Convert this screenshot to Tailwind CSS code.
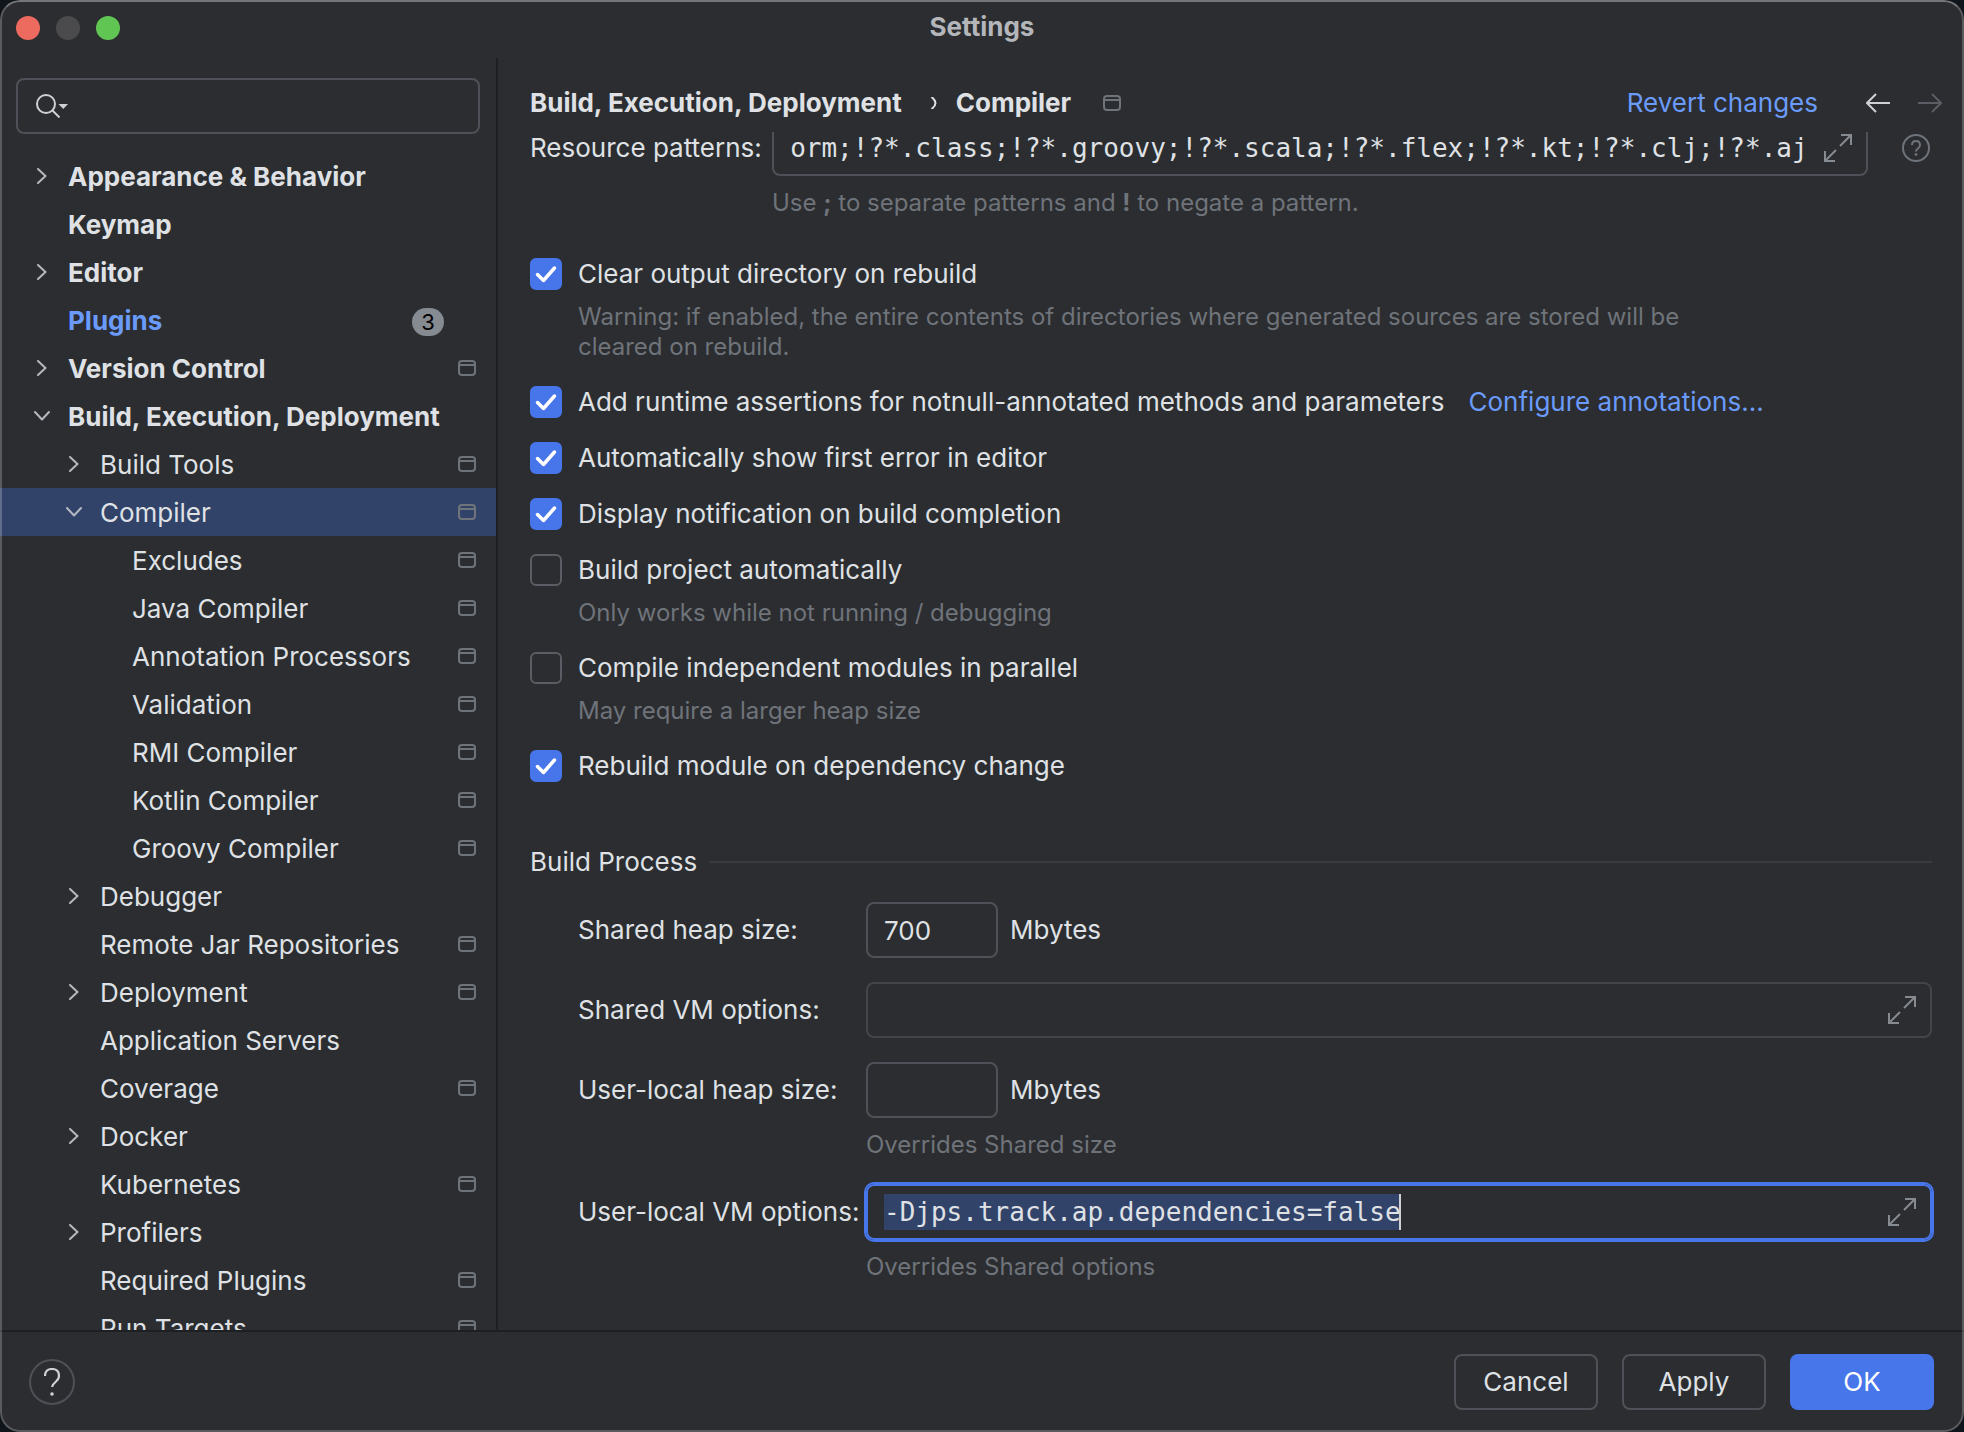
<!DOCTYPE html>
<html lang="en">
<head>
<meta charset="utf-8">
<title>Settings</title>
<meta name="viewport" content="width=device-width, initial-scale=1">
<script src="https://cdn.jsdelivr.net/npm/@tailwindcss/browser@4"></script>
</head>
<body class="bg-[#10151c] font-['Inter',sans-serif] text-[26px] leading-8 text-[#dfe1e5]">

<svg class="hidden" aria-hidden="true">
  <symbol id="right" viewBox="0 0 16 16"><path d="M4 1l7.500 7L4 15" fill="none" stroke="#b4b8bf" stroke-width="2" stroke-linecap="round" stroke-linejoin="round"/></symbol>
  <symbol id="down" viewBox="0 0 16 16"><path d="M1 4l7 7.500L15 4" fill="none" stroke="#b4b8bf" stroke-width="2" stroke-linecap="round" stroke-linejoin="round"/></symbol>
  <symbol id="project" viewBox="0 0 18 16"><rect x="1" y="1" width="16" height="14" rx="3" fill="none" stroke="#6f737a" stroke-width="2"/><path d="M1 5h16" stroke="#6f737a" stroke-width="2"/></symbol>
  <symbol id="expand" viewBox="0 0 28 28"><path d="M17 1h10v10M27 1L16 12M11 27H1V17M1 27l11-11" fill="none" stroke="#868a91" stroke-width="2"/></symbol>
  <symbol id="tick" viewBox="0 0 32 32"><path d="M7.500 16.500l6 6L24.500 10" fill="none" stroke="#fff" stroke-width="3.500" stroke-linecap="round" stroke-linejoin="round"/></symbol>
</svg>

<div class="relative flex h-screen flex-col overflow-hidden rounded-[20px] bg-[#2b2d30]">
  <header class="relative flex h-[58px] shrink-0 items-center justify-center pb-1">
    <div class="absolute top-4 left-4 flex gap-4">
      <button aria-label="Close" class="size-6 rounded-full bg-[#ed6a5e]"></button>
      <button aria-label="Minimize" class="size-6 rounded-full bg-[#4b4b4d]"></button>
      <button aria-label="Zoom" class="size-6 rounded-full bg-[#61c554]"></button>
    </div>
    <h1 class="font-bold text-[#b4b6ba]">Settings</h1>
  </header>

  <div class="flex min-h-0 flex-1">
    <nav aria-label="Settings categories" class="flex w-[498px] shrink-0 flex-col overflow-hidden border-r-2 border-[#1e1f22] pt-5">
      <div class="relative mx-4 mb-[18px] h-14 shrink-0">
        <input type="search" aria-label="Search settings" class="h-full w-full rounded-lg border-2 border-[#4e5157] bg-transparent pr-4 pl-14 outline-none">
        <svg class="pointer-events-none absolute top-4 left-5 h-6 w-8" viewBox="0 0 32 24" fill="none"><circle cx="10" cy="10" r="9" stroke="#ced0d6" stroke-width="2"/><path d="M16.500 16.500l7 7" stroke="#ced0d6" stroke-width="2"/><path d="M22.500 10h9.500l-4.750 5z" fill="#ced0d6"/></svg>
      </div>
      <ul class="whitespace-nowrap [&_a]:flex [&_a]:h-12 [&_a]:items-center [&_a]:pr-5 [&_a>span:first-of-type]:flex-1 [&_a>span:first-of-type]:pt-0.5 [&_svg]:h-4 [&_svg]:shrink-0">
        <li><a href="#" class="gap-[18px] pl-[34px] font-bold"><svg class="w-4"><use href="#right"/></svg><span>Appearance &amp; Behavior</span></a></li>
        <li><a href="#" class="pl-[68px] font-bold"><span>Keymap</span></a></li>
        <li><a href="#" class="gap-[18px] pl-[34px] font-bold"><svg class="w-4"><use href="#right"/></svg><span>Editor</span></a></li>
        <li><a href="#" class="pl-[68px] font-bold text-[#6b9bfa]"><span>Plugins</span><span class="mt-1 mr-8 h-7 w-8 rounded-full bg-[#868a91] text-center text-[22px] leading-7 font-normal text-black">3</span></a></li>
        <li><a href="#" class="gap-[18px] pl-[34px] font-bold"><svg class="w-4"><use href="#right"/></svg><span>Version Control</span><svg class="w-[18px]"><use href="#project"/></svg></a></li>
        <li><a href="#" class="gap-[18px] pl-[34px] font-bold"><svg class="w-4"><use href="#down"/></svg><span>Build, Execution, Deployment</span></a></li>
        <li><a href="#" class="gap-[18px] pl-[66px]"><svg class="w-4"><use href="#right"/></svg><span>Build Tools</span><svg class="w-[18px]"><use href="#project"/></svg></a></li>
        <li><a href="#" aria-current="page" class="gap-[18px] bg-[#32436a] pl-[66px]"><svg class="w-4"><use href="#down"/></svg><span>Compiler</span><svg class="w-[18px]"><use href="#project"/></svg></a></li>
        <li><a href="#" class="pl-[132px]"><span>Excludes</span><svg class="w-[18px]"><use href="#project"/></svg></a></li>
        <li><a href="#" class="pl-[132px]"><span>Java Compiler</span><svg class="w-[18px]"><use href="#project"/></svg></a></li>
        <li><a href="#" class="pl-[132px]"><span>Annotation Processors</span><svg class="w-[18px]"><use href="#project"/></svg></a></li>
        <li><a href="#" class="pl-[132px]"><span>Validation</span><svg class="w-[18px]"><use href="#project"/></svg></a></li>
        <li><a href="#" class="pl-[132px]"><span>RMI Compiler</span><svg class="w-[18px]"><use href="#project"/></svg></a></li>
        <li><a href="#" class="pl-[132px]"><span>Kotlin Compiler</span><svg class="w-[18px]"><use href="#project"/></svg></a></li>
        <li><a href="#" class="pl-[132px]"><span>Groovy Compiler</span><svg class="w-[18px]"><use href="#project"/></svg></a></li>
        <li><a href="#" class="gap-[18px] pl-[66px]"><svg class="w-4"><use href="#right"/></svg><span>Debugger</span></a></li>
        <li><a href="#" class="pl-[100px]"><span>Remote Jar Repositories</span><svg class="w-[18px]"><use href="#project"/></svg></a></li>
        <li><a href="#" class="gap-[18px] pl-[66px]"><svg class="w-4"><use href="#right"/></svg><span>Deployment</span><svg class="w-[18px]"><use href="#project"/></svg></a></li>
        <li><a href="#" class="pl-[100px]"><span>Application Servers</span></a></li>
        <li><a href="#" class="pl-[100px]"><span>Coverage</span><svg class="w-[18px]"><use href="#project"/></svg></a></li>
        <li><a href="#" class="gap-[18px] pl-[66px]"><svg class="w-4"><use href="#right"/></svg><span>Docker</span></a></li>
        <li><a href="#" class="pl-[100px]"><span>Kubernetes</span><svg class="w-[18px]"><use href="#project"/></svg></a></li>
        <li><a href="#" class="gap-[18px] pl-[66px]"><svg class="w-4"><use href="#right"/></svg><span>Profilers</span></a></li>
        <li><a href="#" class="pl-[100px]"><span>Required Plugins</span><svg class="w-[18px]"><use href="#project"/></svg></a></li>
        <li><a href="#" class="pl-[100px]"><span>Run Targets</span><svg class="w-[18px]"><use href="#project"/></svg></a></li>
      </ul>
    </nav>

    <main class="flex min-w-0 flex-1 flex-col">
      <div class="flex h-[74px] shrink-0 items-center pt-4 pr-[22px] pl-8">
        <h2 class="flex items-center font-bold whitespace-nowrap">
          <span>Build, Execution, Deployment</span>
          <svg class="mr-[18px] ml-7 h-3 w-2" viewBox="0 0 8 12" fill="none"><path d="M1.500 0q4 3 4 6t-4 6" stroke="#dfe1e5" stroke-width="2"/></svg>
          <span>Compiler</span>
          <svg class="ml-8 h-4 w-[18px]"><use href="#project"/></svg>
        </h2>
        <a href="#" class="ml-auto whitespace-nowrap text-[#6b9bfa]">Revert changes</a>
        <button aria-label="Back" class="ml-12"><svg class="h-5 w-6" viewBox="0 0 24 20" fill="none" stroke="#ced0d6" stroke-width="2"><path d="M24 10H1M10 1l-9 9 9 9"/></svg></button>
        <button aria-label="Forward" disabled class="ml-7"><svg class="h-5 w-6" viewBox="0 0 24 20" fill="none" stroke="#5a5d63" stroke-width="2"><path d="M0 10h23M14 1l9 9-9 9"/></svg></button>
      </div>

      <form class="min-h-0 flex-1 overflow-hidden px-8">
        <div class="-mt-3 flex items-center">
          <label for="patterns" class="w-[242px] shrink-0">Resource patterns:</label>
          <div class="flex h-14 min-w-0 flex-1 items-center rounded-lg border-2 border-[#4e5157] pr-3.5 pl-[15px]">
            <input id="patterns" type="text" value="!?*.java;!?*.form;!?*.class;!?*.groovy;!?*.scala;!?*.flex;!?*.kt;!?*.clj;!?*.aj" class="h-9 min-w-0 flex-1 bg-transparent font-['DejaVu_Sans_Mono',monospace] outline-none">
            <button type="button" aria-label="Expand" class="ml-4"><svg class="size-7"><use href="#expand"/></svg></button>
          </div>
          <svg class="mr-0.5 ml-[34px] size-7 shrink-0" viewBox="0 0 28 28" fill="none" stroke="#6f737a" stroke-width="2"><circle cx="14" cy="14" r="13"/><path d="M10 11q0-4 4-4t4 4q0 2-2 3.500T14 17.500"/><circle cx="14" cy="20.500" r="1" fill="#6f737a" stroke-width="1"/></svg>
        </div>
        <p class="mt-3 ml-[242px] text-2xl leading-[30px] text-[#6f737a]">Use <b>;</b> to separate patterns and <b>!</b> to negate a pattern.</p>

        <div class="mt-10 [&_input]:col-start-1 [&_input]:row-start-1 [&_input]:size-8 [&_input]:appearance-none [&_input]:rounded-md [&_input]:border-2 [&_input]:border-[#5a5d63] [&_input:checked]:bg-[#4775ea] [&_input:checked]:border-[#4775ea] [&_label]:flex [&_label]:w-fit [&_label]:items-center [&_label]:gap-4 [&_p]:mt-3 [&_p]:ml-12 [&_p]:text-2xl [&_p]:leading-[30px] [&_p]:text-[#6f737a]">
          <label><span class="grid"><input type="checkbox" checked class="peer"><svg class="pointer-events-none col-start-1 row-start-1 hidden size-8 peer-checked:block"><use href="#tick"/></svg></span>Clear output directory on rebuild</label>
          <p class="max-w-[1120px]">Warning: if enabled, the entire contents of directories where generated sources are stored will be cleared on rebuild.</p>
          <div class="mt-6 flex items-center gap-6">
            <label><span class="grid"><input type="checkbox" checked class="peer"><svg class="pointer-events-none col-start-1 row-start-1 hidden size-8 peer-checked:block"><use href="#tick"/></svg></span>Add runtime assertions for notnull-annotated methods and parameters</label>
            <a href="#" class="text-[#6b9bfa]">Configure annotations...</a>
          </div>
          <label class="mt-6"><span class="grid"><input type="checkbox" checked class="peer"><svg class="pointer-events-none col-start-1 row-start-1 hidden size-8 peer-checked:block"><use href="#tick"/></svg></span>Automatically show first error in editor</label>
          <label class="mt-6"><span class="grid"><input type="checkbox" checked class="peer"><svg class="pointer-events-none col-start-1 row-start-1 hidden size-8 peer-checked:block"><use href="#tick"/></svg></span>Display notification on build completion</label>
          <label class="mt-6"><span class="grid"><input type="checkbox" class="peer"><svg class="pointer-events-none col-start-1 row-start-1 hidden size-8 peer-checked:block"><use href="#tick"/></svg></span>Build project automatically</label>
          <p>Only works while not running / debugging</p>
          <label class="mt-6"><span class="grid"><input type="checkbox" class="peer"><svg class="pointer-events-none col-start-1 row-start-1 hidden size-8 peer-checked:block"><use href="#tick"/></svg></span>Compile independent modules in parallel</label>
          <p>May require a larger heap size</p>
          <label class="mt-6"><span class="grid"><input type="checkbox" checked class="peer"><svg class="pointer-events-none col-start-1 row-start-1 hidden size-8 peer-checked:block"><use href="#tick"/></svg></span>Rebuild module on dependency change</label>
        </div>

        <h3 class="mt-16 flex items-center gap-3">Build Process<span class="h-0.5 flex-1 bg-[#393b40]"></span></h3>

        <div class="mt-6 grid grid-cols-[288px_minmax(0,1fr)] items-center pl-12">
          <label for="shared-heap">Shared heap size:</label>
          <div class="flex items-center gap-3"><input id="shared-heap" type="text" value="700" class="h-14 w-[132px] rounded-lg border-2 border-[#4e5157] bg-transparent px-4 outline-none"><span>Mbytes</span></div>

          <label for="shared-vm" class="mt-6">Shared VM options:</label>
          <div class="mt-6 flex h-14 items-center rounded-lg border-2 border-[#43454a] pr-3.5 pl-4">
            <input id="shared-vm" type="text" class="h-9 min-w-0 flex-1 bg-transparent font-['DejaVu_Sans_Mono',monospace] outline-none">
            <button type="button" aria-label="Expand"><svg class="size-7"><use href="#expand"/></svg></button>
          </div>

          <label for="local-heap" class="mt-6">User-local heap size:</label>
          <div class="mt-6 flex items-center gap-3"><input id="local-heap" type="text" class="h-14 w-[132px] rounded-lg border-2 border-[#4e5157] bg-transparent px-4 outline-none"><span>Mbytes</span></div>
          <p class="col-start-2 mt-3 text-2xl leading-[30px] text-[#6f737a]">Overrides Shared size</p>

          <label for="local-vm" class="mt-6 whitespace-nowrap">User-local VM options:</label>
          <div class="relative mt-6 flex h-14 items-center rounded-lg border-2 border-[#4775ea] pr-3.5 pl-4 ring-2 ring-[#4775ea]">
            <input id="local-vm" type="text" value="-Djps.track.ap.dependencies=false" class="h-9 min-w-0 flex-1 bg-transparent font-['DejaVu_Sans_Mono',monospace] leading-9 outline-none selection:bg-[#32436a] selection:text-[#dfe1e5]">
            <span class="absolute top-2 left-[531px] h-9 w-0.5 bg-[#ced0d6]"></span>
            <button type="button" aria-label="Expand"><svg class="size-7"><use href="#expand"/></svg></button>
          </div>
          <p class="col-start-2 mt-3 text-2xl leading-[30px] text-[#6f737a]">Overrides Shared options</p>
        </div>
      </form>
    </main>
  </div>

  <footer class="flex h-[102px] shrink-0 items-center border-t-2 border-[#1e1f22] pr-[30px] pl-[29px]">
    <button aria-label="Help" class="grid size-[46px] place-items-center rounded-full border-2 border-[#4e5157]"><svg class="h-7 w-4" viewBox="0 0 16 28" fill="none"><path d="M1 8q0-7 7-7t7 7q0 3-3 5.500T8 19" stroke="#ced0d6" stroke-width="2.200"/><circle cx="8" cy="26" r="1.800" fill="#ced0d6"/></svg></button>
    <div class="ml-auto flex gap-6">
      <button class="h-14 w-36 rounded-lg border-2 border-[#4e5157]">Cancel</button>
      <button class="h-14 w-36 rounded-lg border-2 border-[#4e5157]">Apply</button>
      <button class="h-14 w-36 rounded-lg bg-[#4775ea] text-white">OK</button>
    </div>
  </footer>

  <div class="pointer-events-none absolute inset-0 rounded-[20px] border-2 border-white/22 border-t-white/35"></div>
</div>

<script>
  // Show the end of the long pattern list, and start with the VM options selected.
  const patterns = document.getElementById('patterns');
  patterns.scrollLeft = patterns.scrollWidth;
  const vm = document.getElementById('local-vm');
  vm.focus({ preventScroll: true });
  vm.select();
</script>
</body>
</html>
